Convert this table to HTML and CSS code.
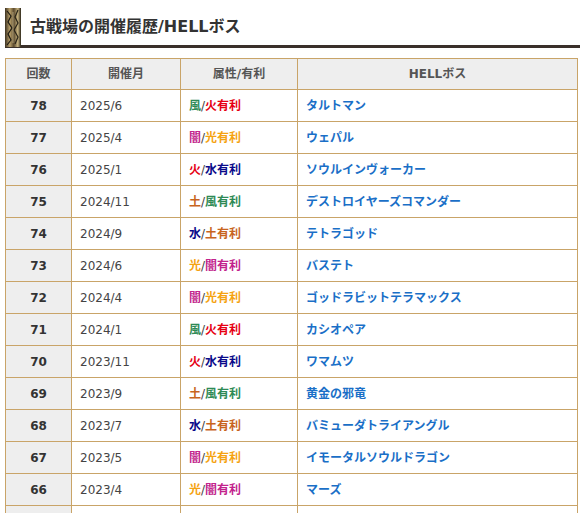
FILE: index.html
```html
<!DOCTYPE html>
<html lang="ja">
<head>
<meta charset="utf-8">
<link rel="stylesheet" href="styles.css">
</head>
<body>
<div class="page">
  <h2 class="title">
    <svg class="ornament" width="16" height="39" viewBox="0 0 16 39">
      <defs>
        <linearGradient id="g" x1="0" x2="1" y1="0" y2="0">
          <stop offset="0" stop-color="#3a3020"/>
          <stop offset="0.3" stop-color="#b9a06a"/>
          <stop offset="0.55" stop-color="#5b4a2e"/>
          <stop offset="0.8" stop-color="#c8b480"/>
          <stop offset="1" stop-color="#2a2418"/>
        </linearGradient>
      </defs>
      <rect x="0" y="0" width="16" height="39" fill="url(#g)"/>
      <path d="M2 3 L6 8 L3 14 L7 20 L3 26 L6 32 L2 37" stroke="#1e1a12" stroke-width="1.2" fill="none"/>
      <path d="M13 2 L10 9 L13 15 L9 22 L13 29 L10 36" stroke="#2a2418" stroke-width="1.2" fill="none"/>
      <path d="M8 4 L8 35" stroke="#efe2b8" stroke-width="0.8" fill="none" opacity="0.6"/>
    </svg>
    <span class="title-text">古戦場の開催履歴/HELLボス</span>
  </h2>
  <table class="hist">
    <thead>
      <tr><th class="c1">回数</th><th class="c2">開催月</th><th class="c3">属性/有利</th><th class="c4">HELLボス</th></tr>
    </thead>
    <tbody>
      <tr><th>78</th><td>2025/6</td><td><span class="wind">風</span>/<span class="fire">火有利</span></td><td><a href="#">タルトマン</a></td></tr>
      <tr><th>77</th><td>2025/4</td><td><span class="dark">闇</span>/<span class="light">光有利</span></td><td><a href="#">ウェパル</a></td></tr>
      <tr><th>76</th><td>2025/1</td><td><span class="fire">火</span>/<span class="water">水有利</span></td><td><a href="#">ソウルインヴォーカー</a></td></tr>
      <tr><th>75</th><td>2024/11</td><td><span class="earth">土</span>/<span class="wind">風有利</span></td><td><a href="#">デストロイヤーズコマンダー</a></td></tr>
      <tr><th>74</th><td>2024/9</td><td><span class="water">水</span>/<span class="earth">土有利</span></td><td><a href="#">テトラゴッド</a></td></tr>
      <tr><th>73</th><td>2024/6</td><td><span class="light">光</span>/<span class="dark">闇有利</span></td><td><a href="#">バステト</a></td></tr>
      <tr><th>72</th><td>2024/4</td><td><span class="dark">闇</span>/<span class="light">光有利</span></td><td><a href="#">ゴッドラビットテラマックス</a></td></tr>
      <tr><th>71</th><td>2024/1</td><td><span class="wind">風</span>/<span class="fire">火有利</span></td><td><a href="#">カシオペア</a></td></tr>
      <tr><th>70</th><td>2023/11</td><td><span class="fire">火</span>/<span class="water">水有利</span></td><td><a href="#">ワマムツ</a></td></tr>
      <tr><th>69</th><td>2023/9</td><td><span class="earth">土</span>/<span class="wind">風有利</span></td><td><a href="#">黄金の邪竜</a></td></tr>
      <tr><th>68</th><td>2023/7</td><td><span class="water">水</span>/<span class="earth">土有利</span></td><td><a href="#">バミューダトライアングル</a></td></tr>
      <tr><th>67</th><td>2023/5</td><td><span class="dark">闇</span>/<span class="light">光有利</span></td><td><a href="#">イモータルソウルドラゴン</a></td></tr>
      <tr><th>66</th><td>2023/4</td><td><span class="light">光</span>/<span class="dark">闇有利</span></td><td><a href="#">マーズ</a></td></tr>
      <tr class="tail"><th></th><td></td><td></td><td></td></tr>
    </tbody>
  </table>
</div>
</body>
</html>
```

FILE: styles.css
```css
html, body {
  margin: 0;
  padding: 0;
  background: #fff;
}
body {
  font-family: "DejaVu Sans", "Noto Sans CJK JP", sans-serif;
  color: #333;
  font-size: 12px;
}
.page {
  padding: 8px 5px 0 5px;
}
.title {
  display: flex;
  align-items: flex-end;
  margin: 0 0 10px 0;
  height: 40px;
  font-size: 16px;
  font-weight: bold;
  color: #333;
  border-bottom: 3px solid #3a302a;
  box-sizing: border-box;
}
.ornament {
  display: block;
  flex: none;
  margin-bottom: -2px;
}
.title-text {
  padding: 0 0 7px 9px;
  line-height: 22px;
}
.hist {
  width: 573px;
  border-collapse: collapse;
  table-layout: fixed;
}
.hist th, .hist td {
  border: 1px solid #c9a468;
  height: 32px;
  padding: 0;
  box-sizing: border-box;
  line-height: 18px;
}
.hist thead th {
  background: #eee;
  font-weight: bold;
  color: #555;
  text-align: center;
  height: 31px;
}
.hist tbody th {
  background: #eee;
  font-weight: bold;
  color: #333;
  text-align: center;
}
.hist td {
  padding-left: 8px;
  color: #444;
}
.c1 { width: 66px; }
.c2 { width: 109px; }
.c3 { width: 117px; }
.hist a {
  color: #1a6fc7;
  font-weight: bold;
  text-decoration: none;
}
.wind, .fire, .dark, .light, .water, .earth { font-weight: bold; }
.wind { color: #2e8a55; }
.fire { color: #e60012; }
.dark { color: #c2238c; }
.light { color: #f5a312; }
.water { color: #0a0a8a; }
.earth { color: #c8641e; }
```
